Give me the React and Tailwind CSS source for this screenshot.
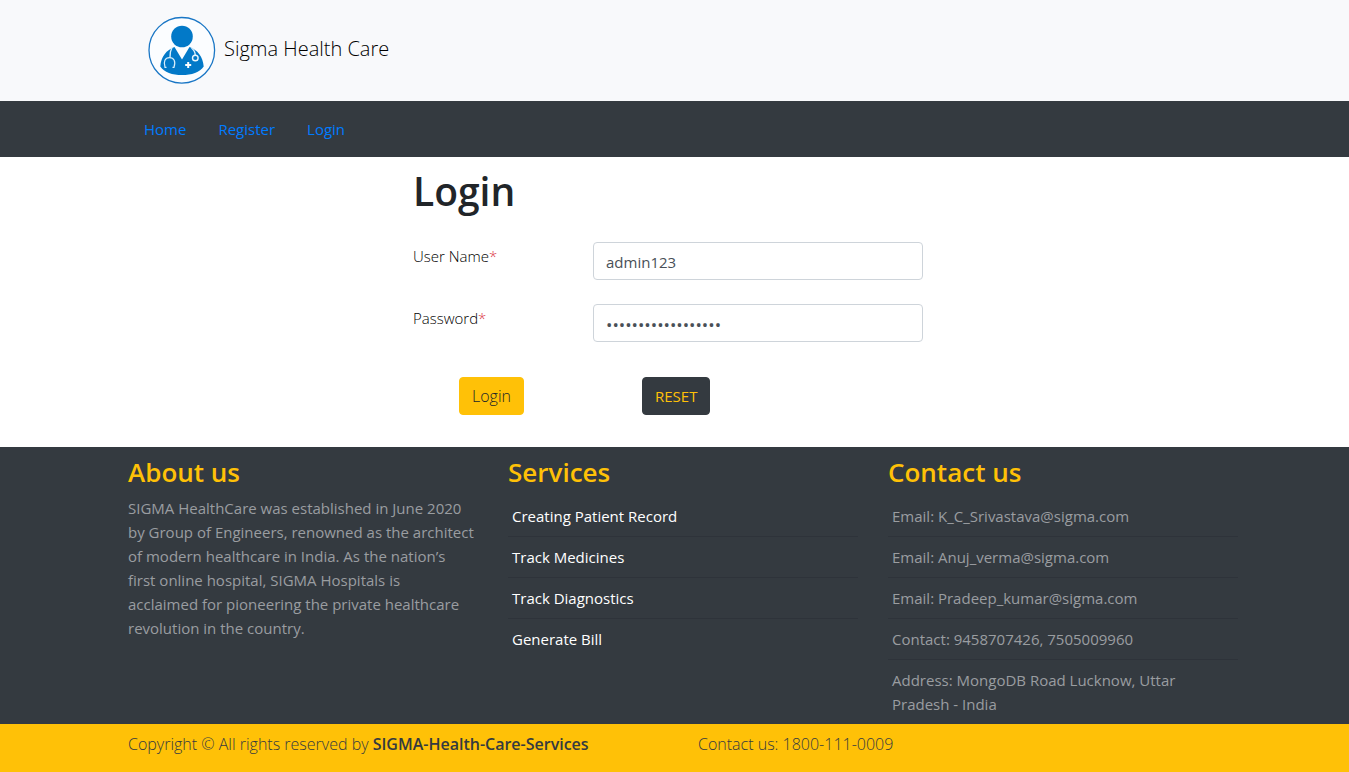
import React from "react";

const services = ["Creating Patient Record", "Track Medicines", "Track Diagnostics", "Generate Bill"];

const contacts = [
  "Email: K_C_Srivastava@sigma.com",
  "Email: Anuj_verma@sigma.com",
  "Email: Pradeep_kumar@sigma.com",
  "Contact: 9458707426, 7505009960",
  "Address: MongoDB Road Lucknow, Uttar Pradesh - India",
];

function Container({ children }) {
  return (
    <div className="pl-[17px]">
      <div className="mx-auto max-w-[1140px] px-[15px]">{children}</div>
    </div>
  );
}

function Logo() {
  return (
    <svg viewBox="0 0 68 68" className="size-[68px]" fill="none" aria-hidden="true">
      <circle cx="33.8" cy="34.3" r="32.8" fill="#fbfdff" stroke="#1976c5" strokeWidth="1.3" />
      <circle cx="34" cy="20.5" r="10.8" fill="#0279c8" />
      <path
        d="M26.5 31C18.5 34 13 40.5 12.3 50.5C16 56.5 24.5 59 34 59C43.5 59 52 56.5 55.7 50.5C55 40.5 49.5 34 41.5 31L34 43.5Z"
        fill="#0279c8"
      />
      <path d="M24 31.5Q21.8 35.500 22 41.500" stroke="#d9effb" strokeWidth="1.4" />
      <path
        d="M18.5 51.300H17C15.2 45.500 17 41.700 21.500 41.700C26 41.700 28 45.500 26 51.300H24.500"
        stroke="#d9effb"
        strokeWidth="1.2"
      />
      <path d="M43.500 32Q47.200 35 47.200 39" stroke="#d9effb" strokeWidth="1.4" />
      <circle cx="47.300" cy="42" r="2.800" stroke="#e8f6fd" strokeWidth="1.400" />
      <path d="M40.200 46V52M37.200 49H43.200" stroke="#fbfdff" strokeWidth="2" />
    </svg>
  );
}

function FooterHeading({ children }) {
  return <h3 className="mb-1.5 text-[26px] leading-[35px] font-semibold text-[#ffc107]">{children}</h3>;
}

const rowClass = "border-b border-[#2e333a] px-1 py-2 last:border-b-0";
const inputClass =
  "h-[38px] w-full rounded border border-[#ced4da] bg-white px-3 pt-1 pb-0.5 text-[#495057] outline-none focus:border-[#80bdff]";

export default function App() {
  return (
    <div className="bg-white font-['Open_Sans','Noto_Sans',sans-serif] text-[15px] leading-6 text-[#212529]">
      <header className="bg-[#f8f9fb] pt-[15px] pb-[17px]">
        <Container>
          <a href="#home" className="flex h-[69px] items-center gap-2 pl-5 text-xl font-light text-black">
            <Logo />
            <span className="pb-0.5">Sigma Health Care</span>
          </a>
        </Container>
      </header>

      <nav className="bg-[#343a40] py-2">
        <Container>
          <ul className="flex text-[#007bff]">
            <li><a href="#home" className="block px-4 py-2">Home</a></li>
            <li><a href="#register" className="block px-4 py-2">Register</a></li>
            <li><a href="#login" className="block px-4 py-2">Login</a></li>
          </ul>
        </Container>
      </nav>

      <main className="pt-2.5 pb-8">
        <Container>
          <form className="md:ml-[285px] md:max-w-[510px]" onSubmit={(e) => e.preventDefault()}>
            <h1 className="mb-7 text-[39px] leading-[47px] font-semibold">Login</h1>
            <div className="grid grid-cols-[180px_1fr] gap-y-6">
              <label htmlFor="username" className="pt-0.5 font-light text-black">
                User Name<span className="text-[#dc3545]">*</span>
              </label>
              <input id="username" type="text" defaultValue="admin123" className={inputClass} />
              <label htmlFor="password" className="pt-0.5 font-light text-black">
                Password<span className="text-[#dc3545]">*</span>
              </label>
              <input id="password" type="password" defaultValue="sigmahealthcare123" className={`${inputClass} text-[17px]`} />
            </div>
            <div className="mt-[35px] grid grid-cols-[183px_1fr] pl-[46px]">
              <div>
                <button type="submit" className="h-[38px] rounded border border-[#ffc107] bg-[#ffc107] px-3 text-base font-light">Login</button>
              </div>
              <div>
                <button type="reset" className="h-[38px] rounded border border-[#343a40] bg-[#343a40] px-3 text-[#ffc107]">RESET</button>
              </div>
            </div>
          </form>
        </Container>
      </main>

      <footer>
        <div className="bg-[#343a40] pt-2 text-[#9a9da0]">
          <Container>
            <div className="grid gap-[30px] md:grid-cols-3">
              <section>
                <FooterHeading>About us</FooterHeading>
                <p className="pr-0.5">
                  SIGMA HealthCare was established in June 2020 by Group of Engineers, renowned as the architect of
                  modern healthcare in India. As the nation’s first online hospital, SIGMA Hospitals is{" "}
                  <br className="hidden xl:block" />
                  acclaimed for pioneering the private healthcare revolution in the country.
                </p>
              </section>
              <section>
                <FooterHeading>Services</FooterHeading>
                <ul className="text-white">
                  {services.map((item) => (
                    <li key={item} className={rowClass}>{item}</li>
                  ))}
                </ul>
              </section>
              <section>
                <FooterHeading>Contact us</FooterHeading>
                <ul>
                  {contacts.map((item) => (
                    <li key={item} className={rowClass}>{item}</li>
                  ))}
                </ul>
              </section>
            </div>
          </Container>
        </div>
        <div className="bg-[#ffc107] pt-2 pb-4 text-base font-light text-[#343a40]">
          <Container>
            <div className="grid gap-x-[30px] md:grid-cols-2">
              <p>Copyright © All rights reserved by <strong className="font-semibold">SIGMA-Health-Care-Services</strong></p>
              <p>Contact us: 1800-111-0009</p>
            </div>
          </Container>
        </div>
      </footer>
    </div>
  );
}
